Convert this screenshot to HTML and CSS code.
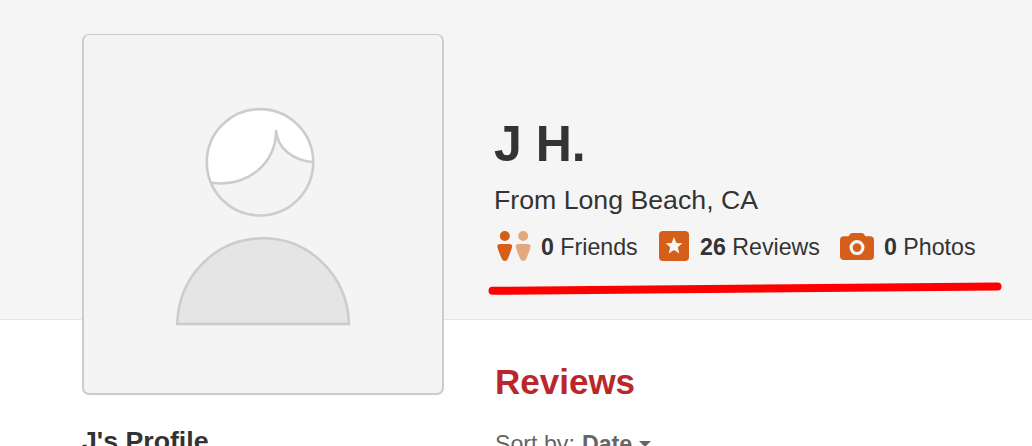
FILE: index.html
```
<!DOCTYPE html>
<html lang="en">
<head>
    <meta charset="UTF-8">
    <meta name="viewport" content="width=device-width, initial-scale=1.0">
    <title>J H.'s Reviews</title>
    <link rel="stylesheet" href="styles.css">
</head>
<body>
    <header class="profile-header">
        <div class="avatar">
            <svg width="358" height="358" viewBox="84 35 358 358">
                <clipPath id="face">
                    <circle cx="260" cy="162.3" r="53.2"/>
                </clipPath>
                <path class="avatar-hair" clip-path="url(#face)" d="M206 182C248 190 277 162 276 130C277 148 293 162 318 162.500V100H200Z"/>
                <circle class="avatar-outline" cx="260" cy="162.3" r="53.2"/>
                <path class="avatar-body" d="M177.200 324C178.500 276 216 238.300 263 238.300S347.500 276 349 324Z"/>
            </svg>
        </div>
        <div class="user-info">
            <h1>J H.</h1>
            <p class="location">From Long Beach, CA</p>
            <ul class="stats">
                <li class="friends">
                    <svg width="34" height="30" viewBox="0 0 34 30">
                        <g fill="#d55f1a">
                            <circle cx="7.800" cy="5" r="5"/>
                            <path d="M3 13h9.600c2.200 0 3 1.500 2.400 3.400-1 3.400-2.600 8-4.300 11.600-1.200 2.500-4.600 2.500-5.800 0C3.200 24.400 1.600 19.800.5 16.400-.1 14.500.8 13 3 13z"/>
                        </g>
                        <g fill="#e2a97e" transform="translate(18.400 0)">
                            <circle cx="7.800" cy="5" r="5"/>
                            <path d="M3 13h9.600c2.200 0 3 1.500 2.400 3.400-1 3.400-2.600 8-4.300 11.600-1.200 2.500-4.600 2.500-5.800 0C3.200 24.400 1.600 19.800.5 16.400-.1 14.500.8 13 3 13z"/>
                        </g>
                    </svg>
                    <span><b>0</b> Friends</span>
                </li>
                <li class="reviews">
                    <svg width="30" height="30" viewBox="0 0 30 30">
                        <rect width="30" height="30" rx="4" fill="#d55f1a"/>
                        <path d="M15 6l2.400 5.900 6 .4-4.600 3.900 1.500 6.200-5.300-3.400-5.300 3.400 1.500-6.200-4.600-3.900 6-.4z" fill="#f5f5f5"/>
                    </svg>
                    <span><b>26</b> Reviews</span>
                </li>
                <li class="photos">
                    <svg width="34" height="30" viewBox="0 0 34 30">
                        <path d="M4 5.200h4.300c1-.1 1.600-3.200 3.700-3.200h10c2.100 0 2.700 3.100 3.700 3.200H30a4 4 0 0 1 4 4V25a4 4 0 0 1-4 4H4a4 4 0 0 1-4-4V9.200a4 4 0 0 1 4-4z" fill="#d55f1a"/>
                        <circle cx="17" cy="16.600" r="5.900" fill="none" stroke="#f5f5f5" stroke-width="3.200"/>
                    </svg>
                    <span><b>0</b> Photos</span>
                </li>
            </ul>
            <svg class="underline" width="516" height="18" viewBox="487 279 516 18">
                <path d="M492.500 290.800L997.500 286.500"/>
            </svg>
        </div>
    </header>

    <main class="content">
        <aside class="sidebar">
            <h3>J's Profile</h3>
        </aside>
        <section class="feed">
            <h2>Reviews</h2>
            <div class="sort">Sort by: <b>Date</b><span class="caret"></span></div>
        </section>
    </main>
</body>
</html>
```
FILE: styles.css
```
* {
    box-sizing: border-box;
}
body {
    margin: 0;
    height: 446px;
    overflow: hidden;
    background-color: #fff;
    color: #333;
    font-family: "Liberation Sans", Arial, sans-serif;
}
h1, h2, h3, p, ul {
    margin: 0;
    padding: 0;
}
svg {
    display: block;
    flex-shrink: 0;
}
.profile-header {
    display: flex;
    align-items: flex-start;
    gap: 50px;
    height: 320px;
    padding: 34px 0 0 82px;
    background-color: #f5f5f5;
    border-bottom: 1px solid #e6e6e6;
}
.avatar {
    flex-shrink: 0;
    width: 362px;
    height: 361px;
    background-color: #f4f4f4;
    border: 2px solid #ccc;
    border-top-width: 1px;
    border-radius: 7px;
}
.avatar-hair {
    fill: #fff;
    stroke: #ccc;
    stroke-width: 2.6;
}
.avatar-outline {
    fill: none;
    stroke: #ccc;
    stroke-width: 2.6;
}
.avatar-body {
    fill: #e5e5e5;
    stroke: #ccc;
    stroke-width: 2.6;
}
.user-info {
    padding-top: 80px;
}
h1 {
    font-size: 50px;
    line-height: 60px;
}
.location {
    margin-top: 8px;
    font-size: 26.7px;
    line-height: 36px;
}
.stats {
    display: flex;
    margin-top: 13px;
    padding-left: 3px;
    list-style: none;
    font-size: 23.2px;
    line-height: 32px;
    height: 30px;
    white-space: nowrap;
}
.stats li {
    display: flex;
    gap: 10px;
}
.stats .friends {
    width: 162px;
}
.stats .reviews {
    width: 181px;
    gap: 11px;
}
.underline {
    margin: 18px 0 0 -7px;
}
.underline path {
    fill: none;
    stroke: #f00;
    stroke-width: 8;
    stroke-linecap: round;
}
.content {
    display: flex;
    padding-left: 82px;
}
.sidebar {
    width: 412px;
    padding-top: 105px;
}
h3 {
    font-size: 26.7px;
    line-height: 32px;
}
.feed {
    padding-top: 42px;
}
h2 {
    padding-left: 1px;
    color: #b9272b;
    font-size: 35px;
    line-height: 40px;
}
.sort {
    display: flex;
    align-items: center;
    gap: 7px;
    margin-top: 27px;
    padding-left: 1px;
    color: #666;
    font-size: 23.2px;
    line-height: 30px;
}
.caret {
    border: 6px solid transparent;
    border-top-color: #666;
    border-bottom: 0;
}
```
